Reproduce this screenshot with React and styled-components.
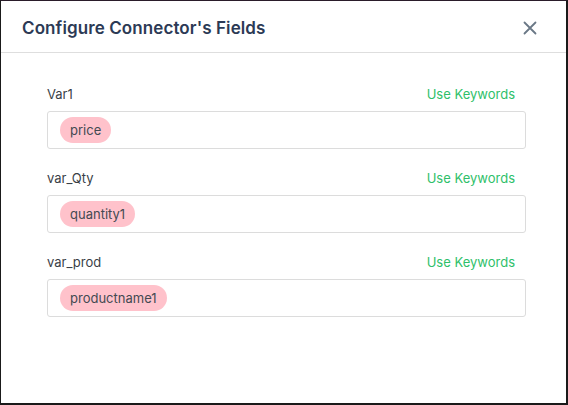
import React from "react";
import styled, { createGlobalStyle } from "styled-components";

const GlobalStyle = createGlobalStyle`
  html, body {
    margin: 0;
    padding: 0;
    background: #1c161c;
  }
  * {
    box-sizing: border-box;
  }
`;

const Modal = styled.div`
  width: 568px;
  height: 405px;
  background: #fff;
  border-top: 1px solid #2a1c2a;
  border-left: 1px solid #1a1a1a;
  border-right: 2px solid #1a1a1a;
  border-bottom: 2px solid #1a1a1a;
  font-family: Inter, "Open Sans", sans-serif;
  display: flex;
  flex-direction: column;
`;

const Header = styled.div`
  height: 52px;
  display: flex;
  align-items: center;
  justify-content: space-between;
  padding: 2px 29px 0 21px;
  border-bottom: 1px solid #dedede;
`;

const Title = styled.h3`
  margin: 0;
  font-size: 17px;
  font-weight: 600;
  color: #2c3a55;
  letter-spacing: 0.1px;
`;

const Close = styled.button`
  border: 0;
  background: none;
  padding: 0;
  width: 14px;
  height: 14px;
  display: flex;
  cursor: pointer;
`;

const Body = styled.div`
  padding: 30px 40px 0 46px;
  display: flex;
  flex-direction: column;
  gap: 18px;
`;

const Field = styled.div`
  display: flex;
  flex-direction: column;
  gap: 6px;
`;

const LabelRow = styled.div`
  display: flex;
  justify-content: space-between;
  align-items: center;
  padding-right: 11px;
  height: 22px;
`;

const Label = styled.span`
  font-size: 13px;
  color: #3a3f47;
`;

const Keywords = styled.a`
  font-size: 13px;
  color: #2fbf6a;
  cursor: pointer;
`;

const InputBox = styled.div`
  height: 38px;
  border: 1px solid #dcdcdc;
  border-radius: 3px;
  display: flex;
  align-items: center;
  padding: 0 12px;
`;

const Chip = styled.span`
  background: #ffc2cb;
  color: #444a52;
  font-size: 13px;
  height: 26px;
  line-height: 26px;
  padding: 0 10px;
  border-radius: 13px;
`;

const fields = [
  { label: "Var1", value: "price" },
  { label: "var_Qty", value: "quantity1" },
  { label: "var_prod", value: "productname1" },
];

const App = () => (
  <>
    <GlobalStyle />
    <Modal>
      <Header>
        <Title>Configure Connector's Fields</Title>
        <Close aria-label="Close">
          <svg width="14" height="14" viewBox="0 0 14 14">
            <path
              d="M1.5 1.5 L12.5 12.5 M12.5 1.5 L1.5 12.5"
              stroke="#6a7886"
              strokeWidth="1.8"
              strokeLinecap="round"
            />
          </svg>
        </Close>
      </Header>
      <Body>
        {fields.map((f) => (
          <Field key={f.label}>
            <LabelRow>
              <Label>{f.label}</Label>
              <Keywords>Use Keywords</Keywords>
            </LabelRow>
            <InputBox>
              <Chip>{f.value}</Chip>
            </InputBox>
          </Field>
        ))}
      </Body>
    </Modal>
  </>
);

export default App;
